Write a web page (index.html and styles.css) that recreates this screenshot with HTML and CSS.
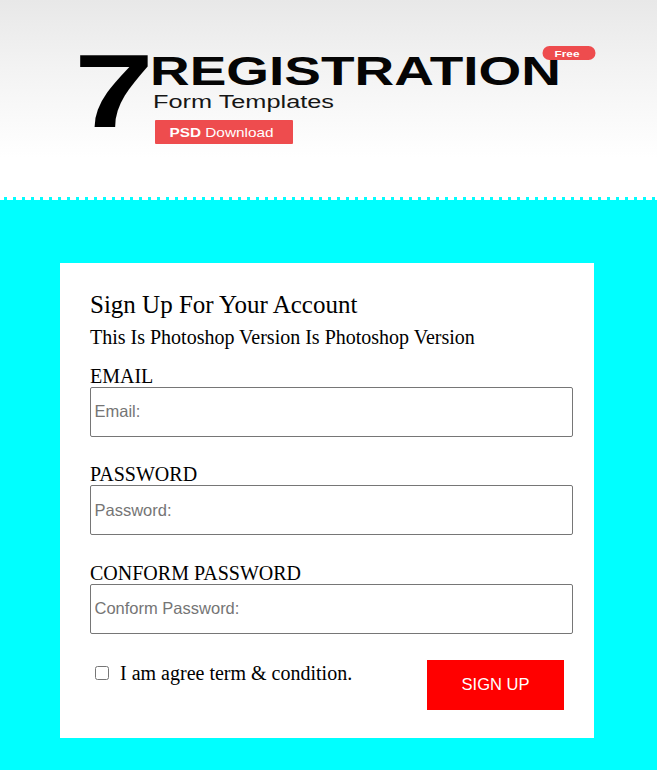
FILE: index.html
```html
<!DOCTYPE html>
<html lang="en">
<head>
<meta charset="utf-8">
<title>Sign Up For Your Account</title>
<link rel="stylesheet" href="styles.css">
</head>
<body>
<header class="banner">
  <svg class="banner-art" width="657" height="197" viewBox="0 0 657 197" aria-label="7 Registration Form Templates PSD Download Free">
    <defs>
      <linearGradient id="bannerBg" x1="0" y1="0" x2="0" y2="1">
        <stop offset="0" stop-color="#e8e8e8"/>
        <stop offset="0.35" stop-color="#f3f3f3"/>
        <stop offset="0.8" stop-color="#ffffff"/>
      </linearGradient>
    </defs>
    <rect width="657" height="197" fill="url(#bannerBg)"/>
    <text class="art-seven" x="74" y="127" textLength="80" lengthAdjust="spacingAndGlyphs">7</text>
    <text class="art-title" x="150" y="85" textLength="411" lengthAdjust="spacingAndGlyphs">REGISTRATION</text>
    <text class="art-sub" x="153" y="107.5" textLength="181" lengthAdjust="spacingAndGlyphs">Form Templates</text>
    <rect class="art-red" x="155" y="120" width="138" height="24" rx="1"/>
    <text class="art-btn" x="169.5" y="137" textLength="104" lengthAdjust="spacingAndGlyphs"><tspan class="art-bold">PSD</tspan> Download</text>
    <rect class="art-red" x="542.5" y="46" width="53" height="14" rx="7"/>
    <text class="art-free" x="554.5" y="57" textLength="25" lengthAdjust="spacingAndGlyphs">Free</text>
  </svg>
</header>
<section class="stage">
  <form class="card">
    <h1 class="title">Sign Up For Your Account</h1>
    <p class="subtitle">This Is Photoshop Version Is Photoshop Version</p>
    <div class="field">
      <label class="field-label" for="email">EMAIL</label>
      <input class="field-input" id="email" type="text" placeholder="Email:">
    </div>
    <div class="field">
      <label class="field-label" for="password">PASSWORD</label>
      <input class="field-input" id="password" type="password" placeholder="Password:">
    </div>
    <div class="field">
      <label class="field-label" for="confirm">CONFORM PASSWORD</label>
      <input class="field-input" id="confirm" type="password" placeholder="Conform Password:">
    </div>
    <div class="actions">
      <label class="agree"><input class="agree-box" type="checkbox">I am agree term &amp; condition.</label>
      <button class="submit" type="button">SIGN UP</button>
    </div>
  </form>
</section>
</body>
</html>
```
FILE: styles.css
```css
html, body {
  margin: 0;
  padding: 0;
  background: #00ffff;
}

body {
  font-family: "Liberation Serif", "Times New Roman", serif;
  color: #000;
}

.banner {
  background: #fff;
}

.banner-art {
  display: block;
}

.art-seven {
  font: 700 103px "Liberation Sans", Arial, sans-serif;
  fill: #000;
}

.art-title {
  font: 700 40px "Liberation Sans", Arial, sans-serif;
  fill: #050505;
}

.art-sub {
  font: 400 18.7px "Liberation Sans", Arial, sans-serif;
  fill: #161616;
}

.art-red {
  fill: #ee4c4e;
}

.art-btn {
  font: 400 13px "Liberation Sans", Arial, sans-serif;
  fill: #fff;
}

.art-bold {
  font-weight: 700;
}

.art-free {
  font: 700 9px "Liberation Sans", Arial, sans-serif;
  fill: #fff;
}

.stage {
  background: #00ffff;
  padding-bottom: 32px;
}

.stage::before {
  content: "";
  display: block;
  height: 3px;
  background: repeating-linear-gradient(90deg, #ffffff 0 4px, #00ffff 4px 7px, #ffffff 7px 9px);
}

.card {
  box-sizing: border-box;
  width: 534px;
  margin: 63px 0 0 60px;
  padding: 28px 30px 28px 30px;
  background: #fff;
}

.title {
  margin: 0 0 6px;
  font-size: 25px;
  line-height: 28px;
  font-weight: normal;
}

.subtitle {
  margin: 0 0 15.5px;
  font-size: 20px;
  line-height: 24px;
}

.field + .field {
  margin-top: 26.5px;
}

.field-label {
  display: block;
  font-size: 20px;
  line-height: 22px;
}

.field-input {
  display: block;
  box-sizing: content-box;
  width: 100%;
  height: 48px;
  margin: 0;
  padding: 0 3.5px;
  border: 1px solid #767676;
  border-radius: 2px;
  background: #fff;
  font: 16.5px "Liberation Sans", Arial, sans-serif;
  color: #000;
  outline: none;
}

.field-input::placeholder {
  color: #757575;
}

.actions {
  display: flex;
  justify-content: space-between;
  align-items: flex-start;
  margin-top: 26px;
}

.agree {
  padding-top: 2px;
  font-size: 20px;
  line-height: 23px;
}

.agree-box {
  width: 14px;
  height: 14px;
  margin: 0 11px 1px 5px;
  vertical-align: baseline;
}

.submit {
  width: 137px;
  height: 50px;
  margin: 0;
  padding: 0;
  border: none;
  border-radius: 0;
  background: #ff0000;
  color: #fff;
  font: 16.5px "Liberation Sans", Arial, sans-serif;
}
```
